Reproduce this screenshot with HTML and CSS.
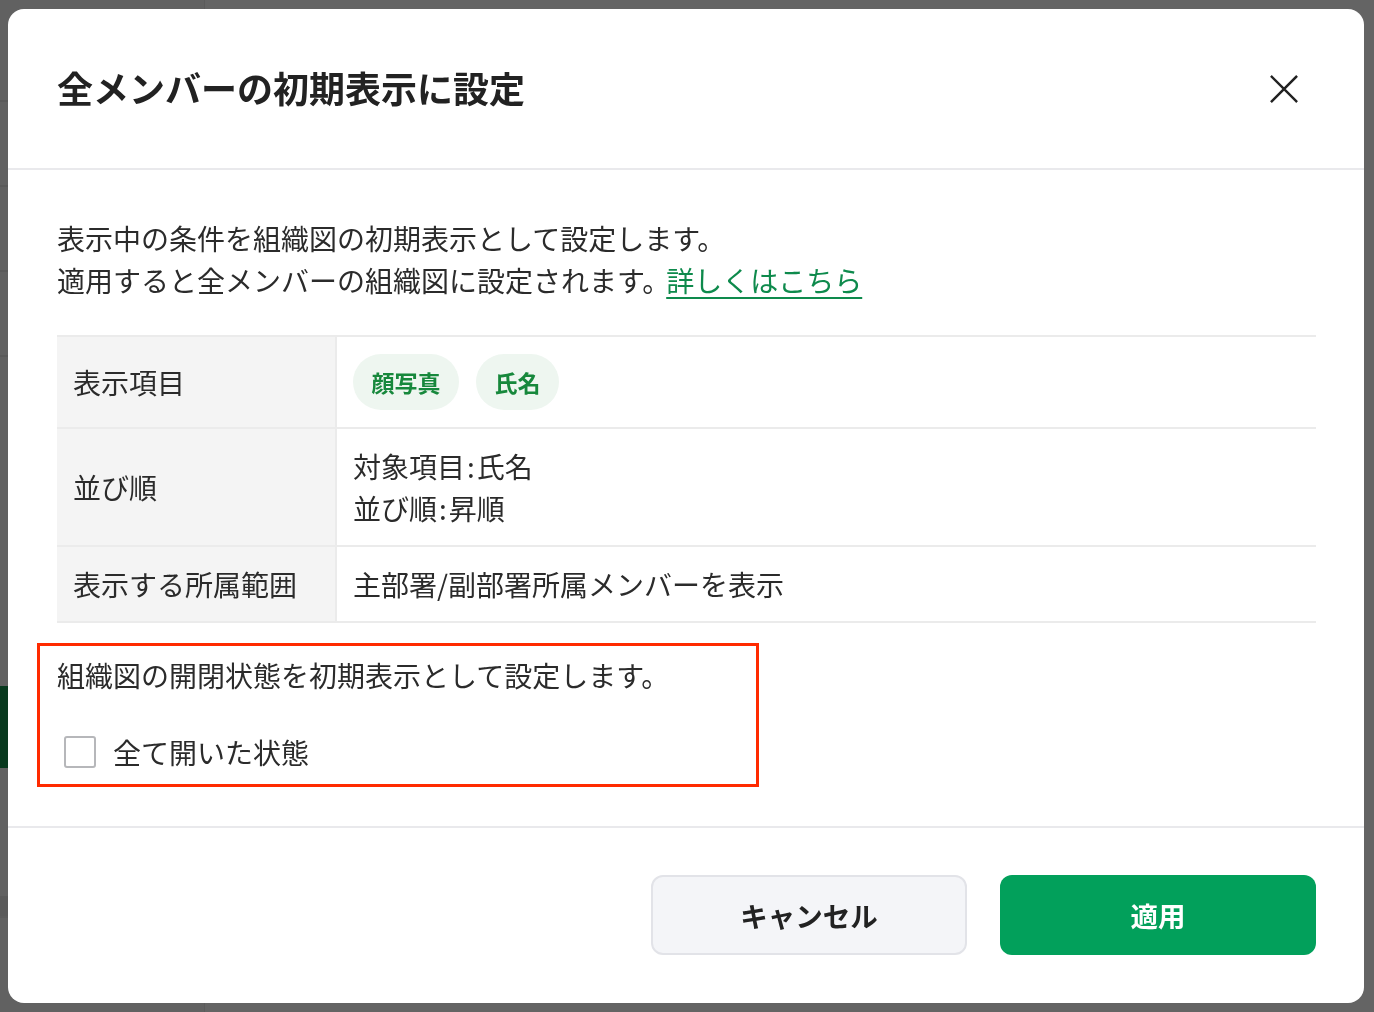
FILE: index.html
```html
<!DOCTYPE html>
<html lang="ja">
<head>
<meta charset="utf-8">
<title>全メンバーの初期表示に設定</title>
<link rel="stylesheet" href="styles.css">
</head>
<body>
<div class="app">
  <aside class="sidebar">
    <div class="side-row"></div>
    <div class="side-row"></div>
    <div class="side-row"></div>
    <div class="side-row side-row--tall"></div>
    <div class="side-active"></div>
    <div class="side-band"></div>
  </aside>
  <main class="main"></main>
</div>

<div class="overlay">
  <div class="modal">
    <header class="modal-header">
      <h1 class="modal-title">全メンバーの初期表示に設定</h1>
      <button class="close-btn" aria-label="閉じる">
        <svg viewBox="0 0 32 32" width="32" height="32"><path d="M3 3 L29 29 M29 3 L3 29" stroke="#222" stroke-width="2.6" stroke-linecap="square" fill="none"/></svg>
      </button>
    </header>

    <div class="modal-body">
      <p class="desc">表示中の条件を組織図の初期表示として設定します。<br>適用すると全メンバーの組織図に設定されます。<a href="#" class="link">詳しくはこちら</a></p>

      <div class="info-table">
        <div class="info-row">
          <div class="info-label">表示項目</div>
          <div class="info-value info-value--chips">
            <span class="chip">顔写真</span>
            <span class="chip">氏名</span>
          </div>
        </div>
        <div class="info-row">
          <div class="info-label">並び順</div>
          <div class="info-value">対象項目<span class="colon">:</span>氏名<br>並び順<span class="colon">:</span>昇順</div>
        </div>
        <div class="info-row">
          <div class="info-label">表示する所属範囲</div>
          <div class="info-value">主部署/副部署所属メンバーを表示</div>
        </div>
      </div>

      <div class="open-state">
        <p class="open-text">組織図の開閉状態を初期表示として設定します。</p>
        <label class="check-row">
          <span class="checkbox"></span>
          <span class="check-label">全て開いた状態</span>
        </label>
        <div class="annotation"></div>
      </div>
    </div>

    <footer class="modal-footer">
      <button class="btn btn-cancel">キャンセル</button>
      <button class="btn btn-apply">適用</button>
    </footer>
  </div>
</div>
</body>
</html>
```

FILE: styles.css
```css
* {
  box-sizing: border-box;
}

html, body {
  margin: 0;
  padding: 0;
  height: 100%;
}

body {
  font-family: "Noto Sans CJK JP", "Noto Sans", sans-serif;
  color: #2b2b2b;
  background: #fff;
  overflow: hidden;
}

/* underlying app (dimmed by overlay) */
.app {
  display: flex;
  height: 1012px;
}

.sidebar {
  width: 205px;
  background: #f2f2f2;
  border-right: 1px solid #e4e4e4;
  display: flex;
  flex-direction: column;
  padding-top: 100px;
}

.side-row {
  height: 85px;
  border-top: 2px solid #e0e0e0;
}

.side-row--tall {
  height: 331px;
}

.side-active {
  height: 82px;
  background: #148f4d;
}

.side-band {
  margin-top: 128px;
  height: 22px;
  background: #e2e2e2;
  border-bottom: 2px solid #e6e6e6;
}

.main {
  flex: 1;
  background: #fbfbfb;
}

/* overlay + modal */
.overlay {
  position: fixed;
  inset: 0;
  background: rgba(0, 0, 0, 0.6);
  padding: 9px 10px 9px 8px;
  display: flex;
}

.modal {
  flex: 1;
  background: #fff;
  border-radius: 16px;
  display: flex;
  flex-direction: column;
  overflow: hidden;
}

.modal-header {
  height: 161px;
  border-bottom: 2px solid #e9e9ec;
  display: flex;
  align-items: center;
  justify-content: space-between;
  padding: 0 56px 0 49px;
}

.modal-title {
  margin: 0 0 2px;
  font-size: 36px;
  font-weight: 700;
  color: #222;
  line-height: 1.2;
}

.close-btn {
  width: 48px;
  height: 48px;
  border: none;
  background: none;
  padding: 0;
  display: flex;
  align-items: center;
  justify-content: center;
  cursor: pointer;
}

.close-btn svg {
  width: 30px;
  height: 30px;
}

.modal-body {
  flex: 1;
  padding: 47px 48px 0 49px;
  font-size: 28px;
  line-height: 42px;
  color: #2b2b2b;
}

.desc {
  margin: 0;
}

.link {
  margin-left: -4px;
  color: #0e8a4c;
  text-decoration: underline;
  text-decoration-thickness: 2px;
  text-underline-offset: 5px;
}

.info-table {
  margin-top: 34px;
  border-top: 2px solid #ebebeb;
}

.info-row {
  display: grid;
  grid-template-columns: 280px 1fr;
  border-bottom: 2px solid #ebebeb;
}

.info-label {
  background: #f4f4f4;
  border-right: 2px solid #ebebeb;
  padding: 16px 16px;
  display: flex;
  align-items: center;
}

.info-value {
  padding: 16px 16px;
}

.colon {
  padding: 0 2px;
}

.info-value--chips {
  padding: 17px 16px;
  display: flex;
  gap: 17px;
  align-items: center;
}

.chip {
  height: 56px;
  padding: 0 18.5px;
  border-radius: 28px;
  background: #eef6f0;
  color: #17883c;
  font-weight: 700;
  font-size: 23px;
  display: inline-flex;
  align-items: center;
}

.open-state {
  position: relative;
  margin-top: 31px;
}

.open-text {
  margin: 0;
}

.check-row {
  margin-top: 35px;
  display: flex;
  align-items: center;
  gap: 17px;
  padding-left: 7px;
}

.checkbox {
  width: 32px;
  height: 32px;
  border: 2.5px solid #b6b7ba;
  border-radius: 3px;
  background: #fff;
}

.annotation {
  position: absolute;
  left: -20px;
  top: -11px;
  width: 722px;
  height: 144px;
  border: 3px solid #ff2a00;
  pointer-events: none;
}

.modal-footer {
  border-top: 2px solid #e9e9ec;
  padding: 47px 48px 48px;
  display: flex;
  justify-content: flex-end;
  gap: 33px;
}

.btn {
  width: 316px;
  height: 80px;
  border-radius: 12px;
  font-family: inherit;
  font-size: 27.5px;
  font-weight: 700;
  cursor: pointer;
}

.btn-cancel {
  background: #f4f5f8;
  border: 2px solid #e2e3e8;
  color: #222;
}

.btn-apply {
  background: #02a05b;
  border: none;
  color: #fff;
}
```
